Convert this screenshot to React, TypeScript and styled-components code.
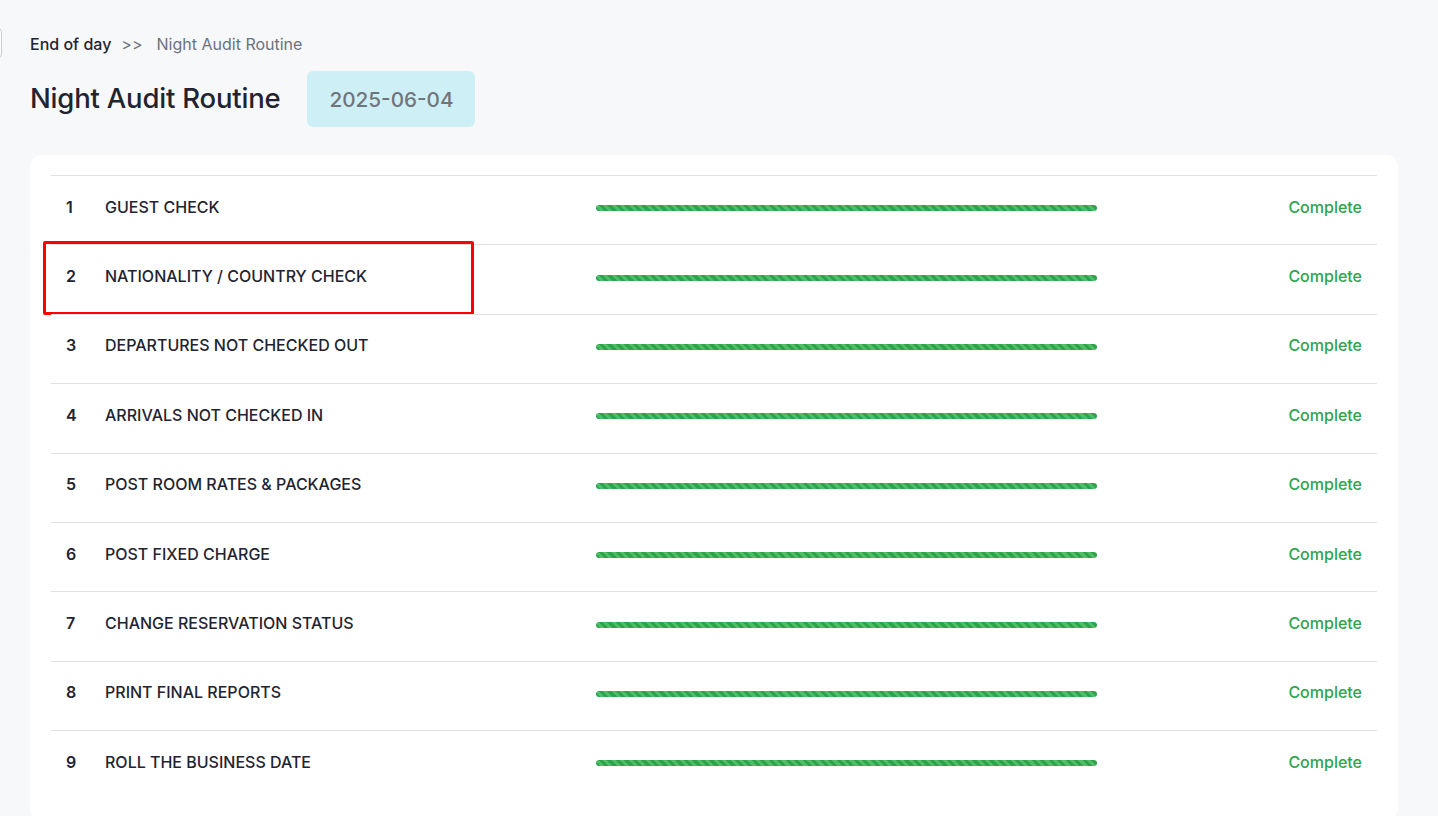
import styled, { createGlobalStyle } from "styled-components";

const Global = createGlobalStyle`
  html, body {
    margin: 0;
    padding: 0;
    background: #f7f8fa;
    font-family: Inter, "Noto Sans", "Liberation Sans", sans-serif;
    color: #1f2430;
  }
  * { box-sizing: border-box; }
`;

const Page = styled.main`
  position: relative;
  min-height: 816px;
  padding: 33px 40px 0 30px;
  overflow: hidden;
`;

const SideToggle = styled.span`
  position: absolute;
  left: -28px;
  top: 28px;
  width: 30px;
  height: 30px;
  border: 1px solid #c9ccd3;
  border-radius: 4px;
  background: #fff;
`;

const Crumbs = styled.nav`
  display: flex;
  align-items: center;
  gap: 10px;
  font-size: 16px;
  line-height: 22px;
`;

const Crumb = styled.span<{ $current?: boolean }>`
  color: ${({ $current }) => ($current ? "#6b7280" : "#1f2430")};
  font-weight: ${({ $current }) => ($current ? 400 : 500)};
`;

const Sep = styled.span`
  color: #6b7280;
  margin-right: 4px;
`;

const Header = styled.header`
  display: flex;
  align-items: center;
  gap: 27px;
  margin-top: 16px;
`;

const Title = styled.h1`
  margin: 0 0 3px;
  font-size: 27.5px;
  font-weight: 500;
  letter-spacing: -0.2px;
  color: #1f2430;
`;

const DateBadge = styled.div`
  height: 56px;
  padding: 0 21px 0 22px;
  display: flex;
  align-items: center;
  background: #cfeff7;
  border-radius: 6px;
  color: #70757c;
  font-size: 20.7px;
  font-weight: 500;
`;

const Card = styled.section`
  margin-top: 28px;
  background: #fff;
  border-radius: 12px;
  padding: 20px 21px;
`;

const Table = styled.div`
  display: flex;
  flex-direction: column;
`;

const Row = styled.div`
  position: relative;
  display: grid;
  grid-template-columns: 39px 491px 501px 1fr;
  align-items: center;
  height: 69.4px;
  padding: 0 15px 7px;
  border-top: 1px solid #dfe1e5;
  font-size: 16px;
`;

const Num = styled.span`
  font-weight: 600;
  color: #1f2430;
`;

const Label = styled.span`
  font-weight: 500;
  color: #1f2430;
`;

const Track = styled.div`
  height: 6px;
  border-radius: 3px;
  margin-top: 3px;
  background: repeating-linear-gradient(
    45deg,
    #2aa54c 0 3px,
    #4dbd68 3px 6px
  );
`;

const Status = styled.span`
  justify-self: end;
  color: #2da44e;
  font-weight: 500;
  font-size: 16px;
`;

const Highlight = styled.span`
  position: absolute;
  left: -8px;
  top: -4px;
  width: 431px;
  height: 74px;
  border: 3px solid #ff0000;
  border-radius: 2px;
  pointer-events: none;
`;

const steps = [
  "GUEST CHECK",
  "NATIONALITY / COUNTRY CHECK",
  "DEPARTURES NOT CHECKED OUT",
  "ARRIVALS NOT CHECKED IN",
  "POST ROOM RATES & PACKAGES",
  "POST FIXED CHARGE",
  "CHANGE RESERVATION STATUS",
  "PRINT FINAL REPORTS",
  "ROLL THE BUSINESS DATE",
];

export default function App() {
  return (
    <>
      <Global />
      <Page>
        <SideToggle />
        <Crumbs>
          <Crumb>End of day</Crumb>
          <Sep>&gt;&gt;</Sep>
          <Crumb $current>Night Audit Routine</Crumb>
        </Crumbs>
        <Header>
          <Title>Night Audit Routine</Title>
          <DateBadge>2025-06-04</DateBadge>
        </Header>
        <Card>
          <Table>
            {steps.map((s, i) => (
              <Row key={s}>
                <Num>{i + 1}</Num>
                <Label>{s}</Label>
                <Track />
                <Status>Complete</Status>
                {i === 1 && <Highlight />}
              </Row>
            ))}
          </Table>
        </Card>
      </Page>
    </>
  );
}
